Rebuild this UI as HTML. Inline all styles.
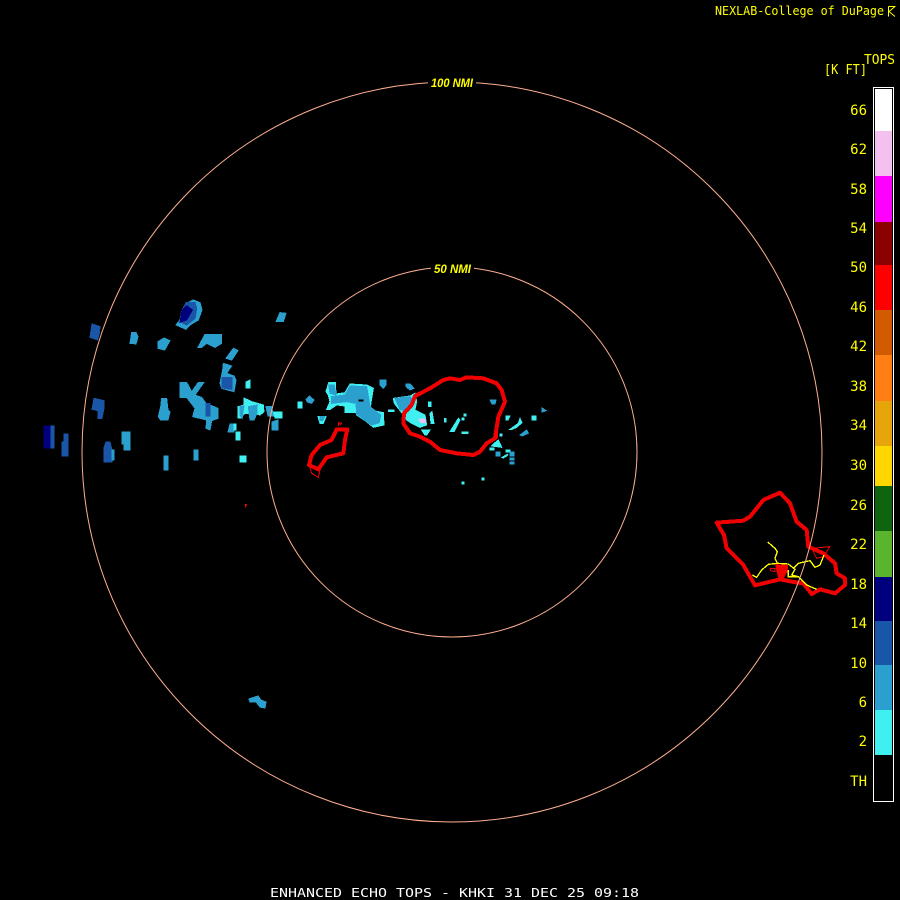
<!DOCTYPE html>
<html><head><meta charset="utf-8"><style>
html,body{margin:0;padding:0;background:#000;width:900px;height:900px;overflow:hidden}
svg{display:block}
text{font-family:"DejaVu Sans Mono",monospace;fill:#ffff00}
.l{font-size:14px;text-anchor:end}
.m{fill:#2b9fce;stroke:#2b9fce;stroke-width:3}.b{fill:#1a56a8;stroke:#1a56a8;stroke-width:3}.n{fill:#00007f;stroke:#00007f;stroke-width:3}.c{fill:#40f0f0;stroke:#40f0f0;stroke-width:3}
.r{fill:none;stroke:#f00000;stroke-linejoin:round}
.y{fill:none;stroke:#ffff00;stroke-width:4}
</style></head><body>
<svg width="900" height="900" viewBox="0 0 900 900" xmlns="http://www.w3.org/2000/svg">
<rect width="900" height="900" fill="#000"/>
<g shape-rendering="crispEdges">
<polygon class="m" style="stroke-width:1" points="249,699 255,697 258,696 261,700 266,702 265,708 260,707 256,702 250,702"/>
<g transform="translate(30 290) scale(.33333)">
<polygon class="m" points="438,105 450,90 456,60 468,40 490,30 510,38 516,60 505,90 480,105 468,118 450,110"/>
<polygon class="b" points="450,95 456,65 468,38 495,38 500,55 495,85 470,105"/>
<polygon class="n" points="450,97 456,60 470,47 487,60 470,90"/>
<polygon class="m" points="738,95 750,68 768,70 760,95"/>
<polygon class="m" points="300,160 305,128 318,128 324,140 318,162"/>
<polygon class="m" points="384,175 384,155 402,144 420,152 404,180"/>
<polygon class="m" points="504,172 525,133 575,133 575,160 555,172 530,160 515,172"/>
<polygon class="m" points="588,205 610,175 624,182 605,210"/>
<polygon class="m" points="570,280 578,240 580,220 605,228 590,250 612,258 618,270 612,305 575,295"/>
<polygon class="b" points="576,294 576,262 606,262 606,298"/>
<polygon class="b" points="180,142 186,102 210,110 208,130 203,150"/>
<polygon class="m" points="450,277 470,277 485,305 505,277 522,277 495,315 515,322 528,340 564,355 564,385 545,392 540,420 528,415 530,390 488,380 495,355 470,322 450,322"/>
<rect class="b" x="528" y="340" width="12" height="38"/>
<polygon class="m" points="385,380 392,350 395,325 410,325 414,360 420,366 414,390 392,390"/>
<polygon class="b" points="186,358 192,325 222,332 222,355 216,385 204,385 204,362"/>
<rect class="b" x="54" y="408" width="18" height="66"/>
<rect class="n" x="42" y="408" width="18" height="66"/>
<polygon class="b" points="96,498 96,456 102,456 102,432 114,432 114,498"/>
<polygon class="b" points="222,516 222,474 228,456 240,456 246,480 246,516"/>
<rect class="m" x="246" y="480" width="6" height="30"/>
<polygon class="m" points="276,426 300,426 300,480 282,480 282,462 276,462"/>
<rect class="m" x="402" y="498" width="12" height="42"/>
<rect class="m" x="492" y="480" width="12" height="30"/>
<rect class="c" x="630" y="498" width="18" height="18"/>
<rect class="c" x="618" y="426" width="12" height="24"/>
<polygon class="m" points="594,426 600,402 612,402 612,426"/>
<rect class="c" x="612" y="402" width="6" height="18"/>
<polygon class="c" points="648,294 648,276 660,270 660,294"/>
<polygon class="c" points="624,384 624,350 642,345 642,324 665,335 700,345 702,365 690,375 680,372 670,390 655,370 640,372 636,384"/>
<polygon class="m" points="630,348 642,348 636,384 630,375"/>
<polygon class="m" points="655,350 682,345 680,372 672,390 660,390"/>
<polygon class="m" points="708,350 725,350 730,378 714,378"/>
<polygon class="c" points="730,366 756,366 756,384 735,384"/>
<polygon class="m" points="726,396 744,390 744,420 726,420"/>
</g>
<g transform="translate(230 370) scale(.33333)">
<rect class="c" x="204" y="96" width="12" height="18"/>
<polygon class="m" points="228,88 238,78 252,90 245,100 232,96"/>
<polygon class="c" points="288,65 296,38 316,38 318,72 345,68 360,42 410,45 430,55 425,85 420,120 460,128 462,165 430,172 410,155 380,135 375,115 365,125 348,125 345,108 320,105 300,118 290,118 300,95 295,75"/>
<polygon class="c" points="345,100 380,100 380,128 345,128"/>
<polygon class="m" points="296,45 312,45 318,75 300,70"/>
<polygon class="m" points="305,80 345,75 360,48 410,50 420,110 452,135 448,158 425,165 380,132 378,100 350,95 305,100"/>
<rect fill="#000" x="385" y="88" width="15" height="7"/>
<polygon class="m" points="450,30 468,30 468,45 460,55 450,45"/>
<polygon class="c" points="264,140 288,140 280,160 270,160"/>
<polygon class="m" points="270,140 284,140 278,152 270,152"/>
<polygon class="m" points="528,42 540,42 552,55 540,60 528,50"/>
<polygon class="c" points="490,85 540,78 555,70 560,95 555,120 585,135 590,165 570,172 545,160 530,150 520,135 505,115 493,100"/>
<polygon class="m" points="495,85 540,80 548,90 545,110 535,125 510,118"/>
<polygon fill="#f0c0f0" points="565,145 585,145 588,160 570,158"/>
<rect class="c" x="475" y="120" width="17" height="5"/>
<rect class="c" x="595" y="96" width="8" height="14"/>
<polygon class="c" points="600,130 606,125 612,160 603,160"/>
<rect class="c" x="644" y="145" width="4" height="11"/>
<polygon class="c" points="660,185 685,145 690,150 672,185"/>
<rect class="c" x="696" y="186" width="18" height="5"/>
<rect class="c" x="696" y="144" width="6" height="6"/>
<rect class="c" x="702" y="132" width="6" height="6"/>
<polygon class="c" points="575,180 600,180 590,195 585,195"/>
<polygon class="m" points="780,90 798,90 795,102 786,102"/>
<polygon class="c" points="828,138 840,138 834,150 828,150"/>
<polygon class="c" points="840,178 865,160 870,145 876,158 860,172 846,178"/>
<rect class="c" x="906" y="138" width="12" height="12"/>
<polygon class="m" points="936,114 948,122 936,126"/>
<polygon class="m" points="870,195 890,180 895,190 876,198"/>
<rect class="c" x="810" y="192" width="6" height="6"/>
<polygon class="c" points="790,222 805,210 815,232 785,228"/>
<rect class="c" x="780" y="234" width="12" height="6"/>
<rect class="m" x="798" y="246" width="12" height="12"/>
<polygon class="c" points="816,262 834,252 830,258 820,264"/>
<rect class="c" x="828" y="240" width="12" height="6"/>
<rect class="m" x="840" y="246" width="12" height="12"/>
<rect class="m" x="840" y="264" width="12" height="6"/>
<rect class="m" x="840" y="276" width="12" height="6"/>
<rect class="c" x="696" y="336" width="6" height="6"/>
<rect class="c" x="756" y="324" width="6" height="6"/>
<polygon fill="#f00000" points="45,402 51,402 48,412 45,412"/>
<polygon class="r" stroke-width="12" points="555,78 600,55 640,30 660,25 690,30 710,22 760,25 800,40 815,60 825,95 805,140 795,205 770,220 750,245 730,255 680,250 630,240 600,215 570,200 540,190 520,160 522,130 545,105"/>
<polygon class="r" stroke-width="12" points="320,178 352,178 345,210 340,250 290,262 265,298 237,285 245,255 270,225 305,210"/>
<polyline class="r" stroke-width="3" points="237,285 245,310 265,322 270,300"/>
<polyline class="r" stroke-width="3" points="325,168 325,158 335,160 328,166"/>
<polyline class="r" stroke-width="3" points="795,190 802,190 802,205"/>
</g>
<g transform="translate(700 480)">
<g transform="scale(.33333)">
<polygon class="r" stroke-width="12" points="50,128 130,122 150,110 190,60 240,38 270,70 290,125 320,150 325,200 370,220 405,250 410,280 435,295 435,315 405,340 360,328 335,342 310,310 275,305 240,298 165,316 130,255 80,205 72,165"/>
<polygon fill="#f00000" points="225,252 265,255 262,275 250,298 235,298"/>
<polyline class="r" stroke-width="3" points="335,205 390,200 370,230 350,235 335,205"/>
<polyline class="r" stroke-width="3" points="210,265 225,265 225,275 212,272 210,265"/>
<polyline class="y" points="203,186 225,205 232,215 225,235 232,250 205,253 185,270 170,292 157,285"/>
<polyline class="y" points="232,250 265,252 285,268 275,285 295,290 300,295 320,315 350,328"/>
<polyline class="y" points="280,265 295,250 330,242 345,262 360,255 372,225"/>
<polyline class="y" points="265,270 265,290 295,290"/>
</g>
</g>
</g>
<circle cx="452" cy="452" r="370" fill="none" stroke="#ffb090" stroke-width="1"/>
<circle cx="452" cy="452" r="185" fill="none" stroke="#ffb090" stroke-width="1"/>
<rect x="428" y="76" width="48" height="12" fill="#000"/>
<rect x="431" y="262" width="43" height="12" fill="#000"/>
<text x="431" y="87" font-size="12" font-weight="bold" font-style="italic" style="font-family:'Liberation Sans',sans-serif" textLength="42" lengthAdjust="spacingAndGlyphs">100 NMI</text>
<text x="434" y="273" font-size="12" font-weight="bold" font-style="italic" style="font-family:'Liberation Sans',sans-serif" textLength="37" lengthAdjust="spacingAndGlyphs">50 NMI</text>
<g shape-rendering="crispEdges">
<rect x="875" y="89" width="17" height="42" fill="#fff"/>
<rect x="875" y="131" width="17" height="45" fill="#f4c0f0"/>
<rect x="875" y="176" width="17" height="46" fill="#ff00ff"/>
<rect x="875" y="222" width="17" height="43" fill="#8b0000"/>
<rect x="875" y="265" width="17" height="45" fill="#ff0000"/>
<rect x="875" y="310" width="17" height="45" fill="#d25a00"/>
<rect x="875" y="355" width="17" height="46" fill="#ff7f14"/>
<rect x="875" y="401" width="17" height="45" fill="#e6a50a"/>
<rect x="875" y="446" width="17" height="40" fill="#ffd700"/>
<rect x="875" y="486" width="17" height="45" fill="#0f640f"/>
<rect x="875" y="531" width="17" height="46" fill="#5ab42d"/>
<rect x="875" y="577" width="17" height="44" fill="#00007f"/>
<rect x="875" y="621" width="17" height="44" fill="#1a56a8"/>
<rect x="875" y="665" width="17" height="45" fill="#2b9fce"/>
<rect x="875" y="710" width="17" height="45" fill="#40f0f0"/>
<rect x="873.500" y="87.500" width="20" height="714" fill="none" stroke="#fff" stroke-width="1"/>
</g>
<text x="715" y="15" font-size="12" textLength="169" lengthAdjust="spacingAndGlyphs">NEXLAB-College of DuPage</text>
<path d="M888.500 6.500h7M888.500 6.500v10M889 11.500L895 6.500M889 11.500L895 16.500" fill="none" stroke="#ffff00" stroke-width="1"/>
<text x="864" y="64" font-size="13" textLength="31" lengthAdjust="spacingAndGlyphs">TOPS</text>
<text x="824" y="74" font-size="13" textLength="43" lengthAdjust="spacingAndGlyphs">[K FT]</text>
<text class="l" x="867" y="115">66</text>
<text class="l" x="867" y="154">62</text>
<text class="l" x="867" y="194">58</text>
<text class="l" x="867" y="233">54</text>
<text class="l" x="867" y="272">50</text>
<text class="l" x="867" y="312">46</text>
<text class="l" x="867" y="351">42</text>
<text class="l" x="867" y="391">38</text>
<text class="l" x="867" y="430">34</text>
<text class="l" x="867" y="470">30</text>
<text class="l" x="867" y="510">26</text>
<text class="l" x="867" y="549">22</text>
<text class="l" x="867" y="589">18</text>
<text class="l" x="867" y="628">14</text>
<text class="l" x="867" y="668">10</text>
<text class="l" x="867" y="707">6</text>
<text class="l" x="867" y="746">2</text>
<text class="l" x="867" y="786">TH</text>
<text x="270" y="897" font-size="12" style="fill:#fff" textLength="369" lengthAdjust="spacingAndGlyphs">ENHANCED ECHO TOPS - KHKI 31 DEC 25 09:18</text>
</svg>
</body></html>
